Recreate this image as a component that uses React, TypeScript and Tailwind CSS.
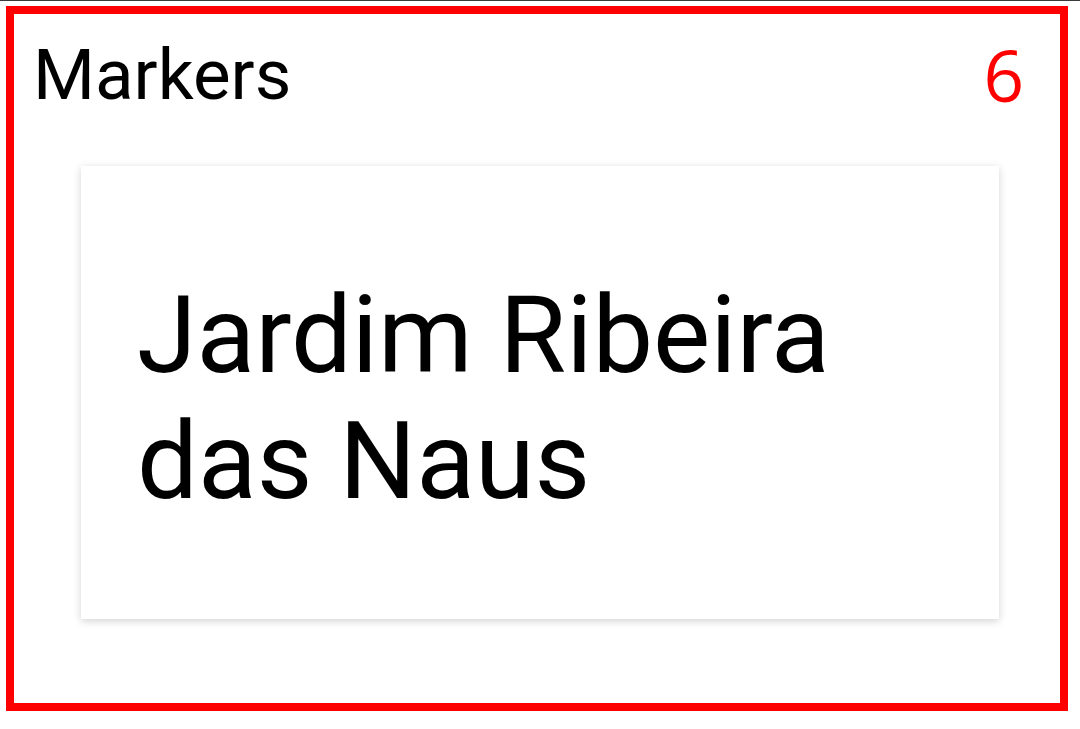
import React from 'react';

export default function App() {
  return (
    <div className="w-[1080px] h-[729px] bg-white overflow-hidden" style={{ fontFamily: 'Roboto, "Liberation Sans", sans-serif' }}>
      <div className="h-px bg-[#3a3a3a]" />
      <div className="ml-[6px] mt-[5px] w-[1062px] h-[705px] border-[8px] border-[#ff0000] flex flex-col">
        <div className="flex justify-between items-start pl-[19px] pr-[36px] pt-[25px]">
          <span className="text-[71px] leading-[72px] text-black">Markers</span>
          <span className="text-[71px] leading-[72px] text-[#ff0000]" style={{ fontFamily: '"Open Sans", "Noto Sans", sans-serif' }}>6</span>
        </div>
        <div className="ml-[67px] mt-[55px] w-[918px] h-[453px] bg-white shadow-[0_2px_8px_rgba(0,0,0,0.18)] pl-[56px] pr-[56px] pt-[106px]">
          <p className="text-[108px] leading-[126px] text-black">Jardim Ribeira das Naus</p>
        </div>
      </div>
    </div>
  );
}
